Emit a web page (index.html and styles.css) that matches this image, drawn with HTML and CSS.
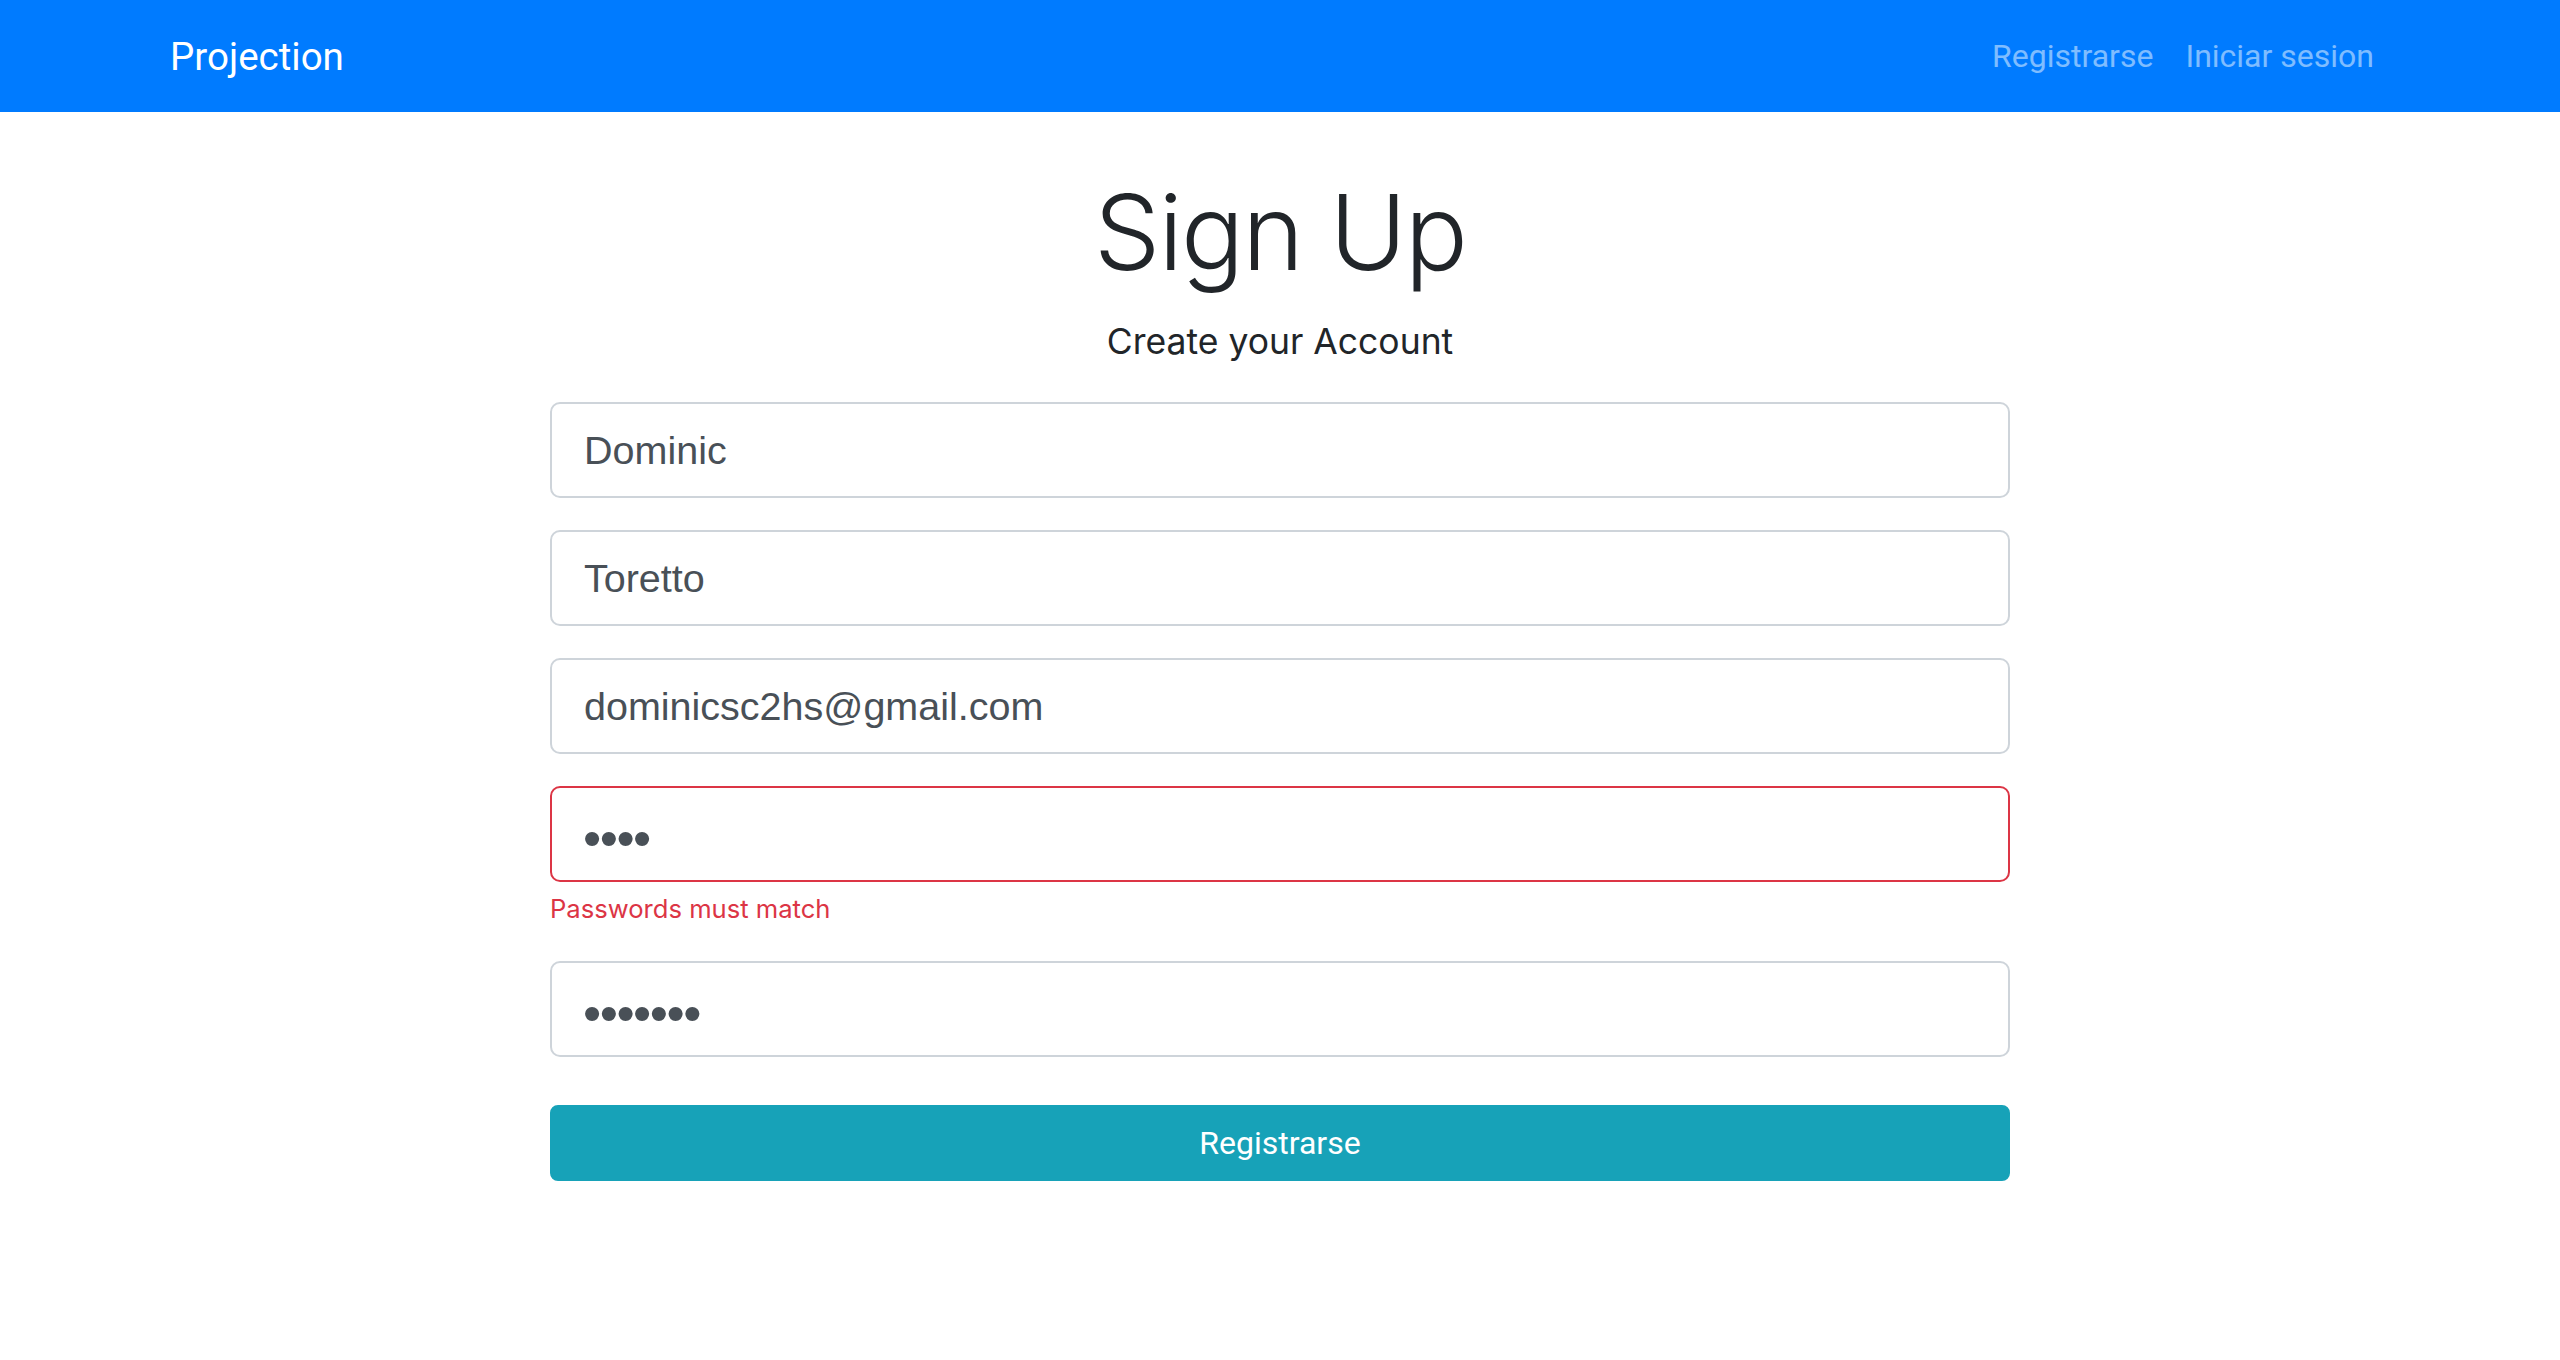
FILE: index.html
```html
<!DOCTYPE html>
<html lang="es">
<head>
<meta charset="utf-8">
<title>Projection - Sign Up</title>
<link rel="stylesheet" href="styles.css">
</head>
<body>
<nav class="navbar">
  <a class="brand" href="#">Projection</a>
  <div class="nav-links">
    <a class="nav-link" href="#">Registrarse</a>
    <a class="nav-link" href="#">Iniciar sesion</a>
  </div>
</nav>
<main class="container">
  <h1 class="title">Sign Up</h1>
  <p class="lead">Create your Account</p>
  <form class="form">
    <div class="form-group">
      <input class="form-control" type="text" value="Dominic">
    </div>
    <div class="form-group">
      <input class="form-control" type="text" value="Toretto">
    </div>
    <div class="form-group">
      <input class="form-control" type="email" value="dominicsc2hs@gmail.com">
    </div>
    <div class="form-group">
      <input class="form-control is-invalid" type="password" value="1234">
      <div class="invalid-feedback">Passwords must match</div>
    </div>
    <div class="form-group">
      <input class="form-control" type="password" value="1234567">
    </div>
    <button class="btn" type="button">Registrarse</button>
  </form>
</main>
</body>
</html>
```
FILE: styles.css
```css
* { box-sizing: border-box; }
body {
  margin: 0;
  background: #fff;
  color: #212529;
  font-family: Inter, "Liberation Sans", sans-serif;
}
.navbar {
  height: 112px;
  background: #007bff;
  display: flex;
  align-items: center;
  padding: 0 170px;
}
.brand {
  font-family: Roboto, sans-serif;
  font-size: 38.5px;
  color: #fff;
  text-decoration: none;
}
.nav-links {
  margin-left: auto;
  display: flex;
}
.nav-link {
  font-family: Roboto, sans-serif;
  font-size: 32px;
  color: rgba(255, 255, 255, 0.5);
  text-decoration: none;
  padding: 0 16px;
}
.container {
  width: 1460px;
  margin: 0 auto;
}
.title {
  margin: 57px 0 0;
  text-align: center;
  font-size: 105px;
  font-weight: 300;
  line-height: 1.2;
  letter-spacing: -2px;
}
.lead {
  margin: 20px 0 34px;
  text-align: center;
  font-size: 35.5px;
  font-weight: 400;
  line-height: 1.5;
}
.form-group {
  margin-bottom: 32px;
}
.form-control {
  display: block;
  width: 100%;
  height: 96px;
  padding: 16px 32px;
  font-family: "Liberation Sans", Arial, sans-serif;
  font-size: 39.5px;
  color: #495057;
  background: #fff;
  border: 2px solid #ced4da;
  border-radius: 10px;
  outline: none;
}
.form-control[type="password"] {
  font-size: 52px;
  letter-spacing: -1.5px;
  padding: 20px 32px 12px 31px;
}
.form-control.is-invalid {
  border-color: #dc3545;
}
.invalid-feedback {
  margin-top: 8px;
  font-size: 25.6px;
  line-height: 1.5;
  color: #dc3545;
}
.btn {
  display: block;
  width: 100%;
  height: 76px;
  margin-top: 48px;
  font-family: Roboto, sans-serif;
  font-size: 32px;
  color: #fff;
  background: #17a2b8;
  border: 2px solid #17a2b8;
  border-radius: 8px;
}
```
